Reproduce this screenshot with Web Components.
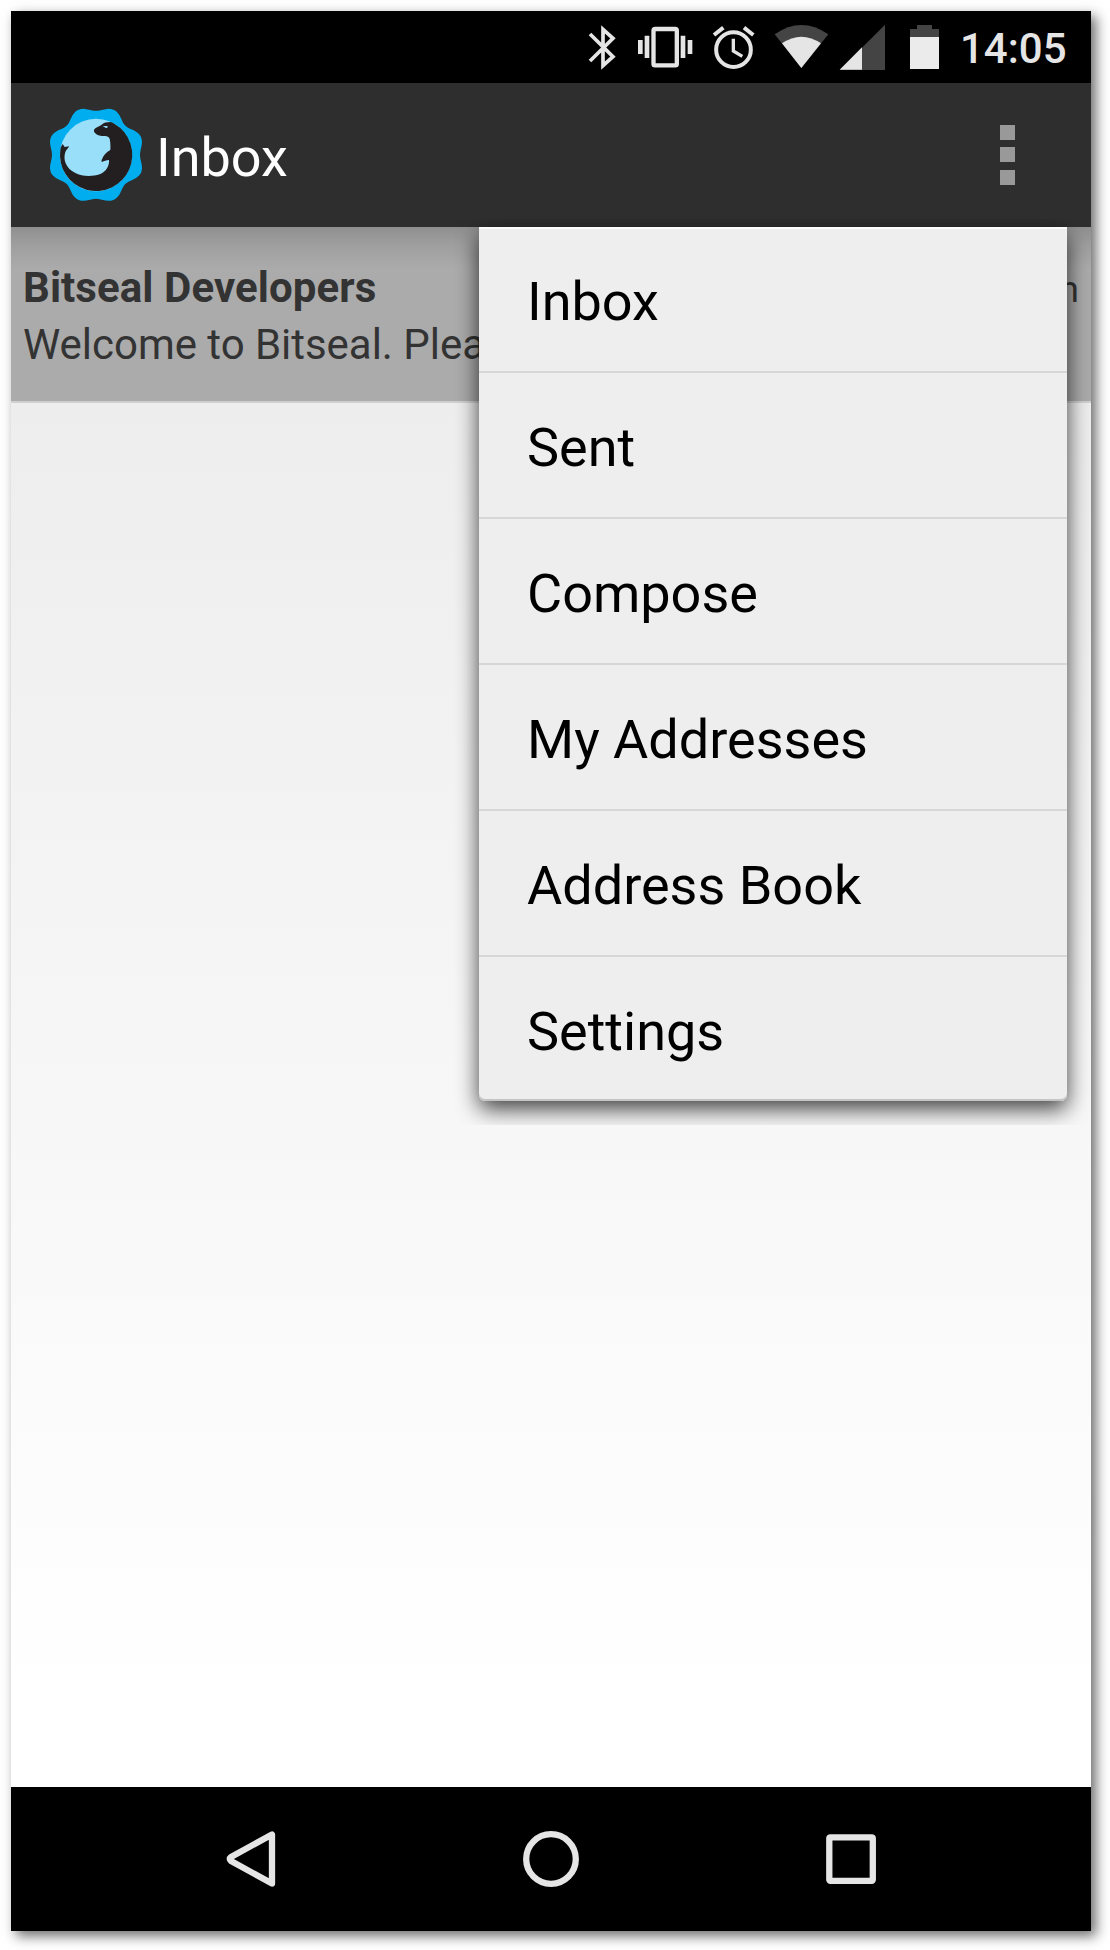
<!DOCTYPE html>
<html lang="en">
<head>
<meta charset="utf-8">
<title>Inbox</title>
<style>
  html, body { margin: 0; background: #fff; }
  body { font-family: Roboto, sans-serif; height: 1950px; overflow: hidden; padding: 11px; box-sizing: border-box; }
</style>
</head>
<body>
<phone-frame>
  <status-bar>14:05</status-bar>
  <action-bar>Inbox</action-bar>
  <message-list>
    <message-row>
      <span slot="from">Bitseal Developers</span>
      <span slot="date">n</span>
      <span slot="subject">Welcome to Bitseal. Plea</span>
    </message-row>
    <overflow-menu slot="menu">
      <menu-entry>Inbox</menu-entry>
      <menu-entry>Sent</menu-entry>
      <menu-entry>Compose</menu-entry>
      <menu-entry>My Addresses</menu-entry>
      <menu-entry>Address Book</menu-entry>
      <menu-entry>Settings</menu-entry>
    </overflow-menu>
  </message-list>
  <nav-bar></nav-bar>
</phone-frame>

<script>
const define = (name, html) => customElements.define(name, class extends HTMLElement {
  constructor() {
    super();
    this.attachShadow({ mode: 'open' }).innerHTML = html;
  }
});

define('phone-frame', `
<style>
  :host { display: flex; flex-direction: column; width: 1080px; height: 1920px; overflow: hidden;
    background: #fff; box-shadow: 5px 5px 12px rgba(0,0,0,.58); }
</style>
<slot></slot>`);

define('status-bar', `
<style>
  :host { display: flex; justify-content: flex-end; height: 72px; flex: none; background: #000;
    color: #e5e5e5; padding-right: 25px; }
  svg { display: block; height: 72px; flex: none; }
  .time { box-sizing: border-box; width: 106px; height: 72px; padding-top: 3px; margin-left: 21px;
    font-size: 42px; line-height: 69px; font-weight: 500; text-align: right; white-space: nowrap; }
</style>
<svg width="28" viewBox="54 33 84 216" fill="none" stroke="#e5e5e5" stroke-width="11">
  <path d="M60 102L129 170L99 197V88L129 115L60 183"/>
</svg>
<svg width="56" style="margin-left:21px" viewBox="201 33 168 216">
  <rect x="250.500" y="87" width="70" height="109" rx="5" fill="none" stroke="#e5e5e5" stroke-width="13"/>
  <path fill="#e5e5e5" d="M204 120h14v42h-14zM224 107h14v67h-14zM332 107h14v67h-14zM353 120h14v42h-14z"/>
</svg>
<svg width="44" style="margin-left:19px" viewBox="426 33 132 216" fill="none" stroke="#e5e5e5">
  <circle cx="490.500" cy="149" r="52" stroke-width="12"/>
  <path stroke-width="10" d="M490 116V153L517 169"/>
  <path stroke-width="12" d="M432 105L460 83M550 105L522 83"/>
</svg>
<svg width="55" style="margin-left:18px" viewBox="612 33 165 216">
  <path fill="#444" d="M694 204L614 103Q694 47 775 103Z"/>
  <path fill="#e5e5e5" d="M694 204L636 130Q694 90 753 130Z"/>
</svg>
<svg width="47" style="margin-left:10px" viewBox="27 33 141 216">
  <path fill="#444" d="M29 210L165 74V210Z"/>
  <path fill="#e5e5e5" d="M29 209L96 142V209Z"/>
</svg>
<svg width="29" style="margin-left:24px" viewBox="240 33 87 216">
  <path fill="#444" d="M240 112V87H261V75H306V87H327V112Z"/>
  <path fill="#ebebeb" d="M240 111h87v96h-87z"/>
</svg>
<div class="time"><slot></slot></div>`);

/* Wavy seal outline: eight lobes, with the diagonal dips cut deeper than the upright ones. */
const seal = (() => {
  const pts = [];
  for (let a = 0; a < 360; a += 3) {
    const t = a * Math.PI / 180, r = 136.500 - 8.500 * Math.cos(8 * t) + 4 * Math.cos(4 * t);
    pts.push((168 + r * Math.cos(t)).toFixed(1) + ' ' + (179.500 + r * Math.sin(t)).toFixed(1));
  }
  return 'M' + pts.join('L') + 'Z';
})();

define('bitseal-logo', `
<style>:host { display: block; width: 96px; height: 96px; } svg { display: block; }</style>
<svg width="96" height="96" viewBox="24 36 288 288">
  <path fill="#00aeef" d="${seal}"/>
  <circle cx="168" cy="180" r="108.500" fill="#99dffa"/>
  <path fill="#231f20" d="M68 147L74 156L87 154C85 160 79 164 76 171C72 183 73 195 77 205C88 231 117 243 146 243C171 243 191 237 201 220C206 211 208 203 207 195C199 195 192 198 186 201C184 200 184 197 186 193C190 181 199 171 211 165C212 152 211 140 209 131C206 124 200 122 192 123C182 124 169 120 166 115C161 111 161 107 163 103C167 97 178 94 184 90C191 83 200 81 211 81C217 82 219 84 223 86A108.500 108.500 0 1 1 61 164C62 157 64 153 68 147Z"/>
  <path fill="#99dffa" d="M188 95Q193 91 204 94L201 99Q195 99 193 96Z"/>
</svg>`);

define('action-bar', `
<style>
  :host { display: flex; align-items: center; box-sizing: border-box; height: 144px; flex: none;
    background: #2e2e2e; color: #fff; padding: 0 76px 0 37px; }
  .title { flex: 1; font-size: 54px; line-height: 139px; padding-top: 5px; margin-left: 12px; }
  .more { display: flex; flex-direction: column; gap: 7px; }
  i { width: 15px; height: 15px; background: #999; }
  i:last-child { margin-top: 1px; }
</style>
<bitseal-logo></bitseal-logo>
<div class="title"><slot></slot></div>
<div class="more"><i></i><i></i><i></i></div>`);

define('message-list', `
<style>
  :host { display: block; position: relative; flex: 1; background: linear-gradient(#ebebeb, #fff 94%); }
  .shade { position: absolute; inset: 0 0 auto 0; height: 42px;
    background: linear-gradient(rgba(0,0,0,.16), rgba(0,0,0,.07) 45%, rgba(0,0,0,0)); }
</style>
<slot></slot>
<div class="shade"></div>
<slot name="menu"></slot>`);

define('message-row', `
<style>
  :host { display: block; box-sizing: border-box; height: 176px; padding: 36px 14px 0 12px;
    background: #ababab; border-bottom: 2px solid #d0d0d0; color: #333; font-size: 42px; line-height: 49px; }
  .top { display: flex; justify-content: space-between; align-items: baseline; margin-bottom: 8px; height: 49px; }
  .from { font-weight: 700; letter-spacing: .08px; }
  .date { font-size: 36px; line-height: 42px; margin-right: -2px; }
  .subject { white-space: nowrap; letter-spacing: -.03px; }
</style>
<div class="top"><div class="from"><slot name="from"></slot></div><div class="date"><slot name="date"></slot></div></div>
<div class="subject"><slot name="subject"></slot></div>`);

define('overflow-menu', `
<style>
  :host { display: flex; flex-direction: column; gap: 2px; position: absolute; top: 0; right: 24px; width: 588px;
    height: 874px; box-sizing: border-box; background: #d7d7d7; border-radius: 0 0 6px 6px;
    box-shadow: 0 8px 22px rgba(0,0,0,.75); clip-path: inset(-8px -25px -24px -25px); }
</style>
<slot></slot>`);

define('menu-entry', `
<style>
  :host { display: block; box-sizing: border-box; height: 144px; flex: none; background: #eee; color: #000;
    padding: 5px 48px 0; font-size: 54px; line-height: 139px; white-space: nowrap; }
  :host(:first-child) { box-shadow: inset 0 2px #fbfbfb; }
  :host(:last-child) { border-radius: 0 0 6px 6px; box-shadow: inset 0 -2px #c4c4c4; }
</style>
<slot></slot>`);

define('nav-bar', `
<style>
  :host { display: flex; height: 144px; flex: none; background: #000; padding: 0 90px; }
  .key { flex: 1; display: flex; align-items: center; justify-content: center; }
  svg { display: block; fill: none; stroke: #e5e5e5; stroke-width: 6.300; stroke-linejoin: round; }
</style>
<div class="key"><svg width="60" height="60" viewBox="0 0 60 60"><path d="M51 5.500V54.500L10 32Q7.500 30 10 28Z"/></svg></div>
<div class="key"><svg width="60" height="60" viewBox="0 0 60 60"><circle cx="30" cy="30" r="24.800"/></svg></div>
<div class="key"><svg width="60" height="60" viewBox="0 0 60 60"><rect x="8.300" y="8.300" width="43.500" height="43.500" rx="1"/></svg></div>`);
</script>
</body>
</html>
